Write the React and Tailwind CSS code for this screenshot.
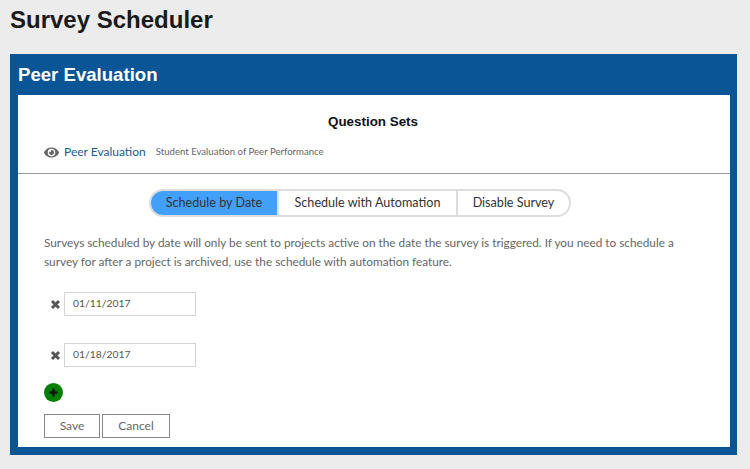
import React from "react";
import { FaEye } from "react-icons/fa";

function DateRow({ value, className }) {
  return (
    <div className={"flex items-center " + className}>
      <svg viewBox="0 0 11 11" className="w-[11px] h-[11px] ml-[6px] mr-[3px] text-[#555]">
        <path d="M2 2 L9 9 M9 2 L2 9" stroke="currentColor" strokeWidth="3" strokeLinecap="butt" fill="none" />
      </svg>
      <div className="w-[132px] h-[24px] border border-[#d4d4d4] pl-[8px] flex items-center text-[10.4px] text-[#555] bg-white">
        {value}
      </div>
    </div>
  );
}

export default function App() {
  return (
    <div className="w-[750px] h-[469px] overflow-hidden bg-[#ececec] font-['Lato',sans-serif] pl-[10px]">
      <h1 className="font-['Liberation_Sans',sans-serif] font-bold text-[24px] leading-[28px] text-[#1a1a1a] pt-[6px] h-[54px]">
        Survey Scheduler
      </h1>
      <div className="w-[727px] h-[401px] bg-[#0a5595] pl-[8px] pr-[7px] pb-[8px] flex flex-col">
        <h2 className="font-['Liberation_Sans',sans-serif] font-bold text-[18.6px] leading-[41px] h-[41px] text-white">
          Peer Evaluation
        </h2>
        <div className="flex-1 bg-white flex flex-col">
          <div className="h-[79px] border-b border-[#999] px-[26px]">
            <div className="font-['Liberation_Sans',sans-serif] font-bold text-[13.4px] leading-[16px] text-[#111] text-center mt-[19px] pr-[2px]">
              Question Sets
            </div>
            <div className="flex items-center h-[14px] mt-[15px]">
              <FaEye className="w-[15px] h-[15px] text-[#666]" />
              <span className="ml-[5px] text-[12px] text-[#1c5a92]">Peer Evaluation</span>
              <span className="ml-[10px] text-[9.6px] text-[#666]">Student Evaluation of Peer Performance</span>
            </div>
          </div>
          <div className="flex justify-center pt-[15px] pr-[28px]">
            <div className="flex h-[28px] border-2 border-[#dddddd] rounded-full overflow-hidden text-[12.6px] text-[#333]">
              <div className="w-[126px] bg-[#42a0fb] flex items-center justify-center pt-px">Schedule by Date</div>
              <div className="w-[179px] border-l-2 border-[#e4e4e4] flex items-center justify-center pt-px">Schedule with Automation</div>
              <div className="w-[113px] border-l-2 border-[#dddddd] flex items-center justify-center pt-px">Disable Survey</div>
            </div>
          </div>
          <p className="mx-[26px] mt-[16px] text-[11.8px] leading-[19px] text-[#666]">
            Surveys scheduled by date will only be sent to projects active on the date the survey is triggered. If you need to schedule a survey for after a project is archived, use the schedule with automation feature.
          </p>
          <div className="px-[26px]">
            <DateRow value="01/11/2017" className="mt-[21px]" />
            <DateRow value="01/18/2017" className="mt-[27px]" />
            <div className="mt-[16px] w-[19px] h-[19px] rounded-full bg-[#008000] flex items-center justify-center">
              <svg viewBox="0 0 9 9" className="w-[9px] h-[9px] text-[#111]">
                <path d="M4.5 0.5 V8.5 M0.5 4.5 H8.5" stroke="currentColor" strokeWidth="2.4" fill="none" />
              </svg>
            </div>
            <div className="flex gap-[2px] mt-[12px]">
              <div className="w-[56px] h-[24px] border border-[#888] flex items-center justify-center text-[12px] text-[#666]">Save</div>
              <div className="w-[68px] h-[24px] border border-[#888] flex items-center justify-center text-[12px] text-[#666]">Cancel</div>
            </div>
          </div>
        </div>
      </div>
    </div>
  );
}
